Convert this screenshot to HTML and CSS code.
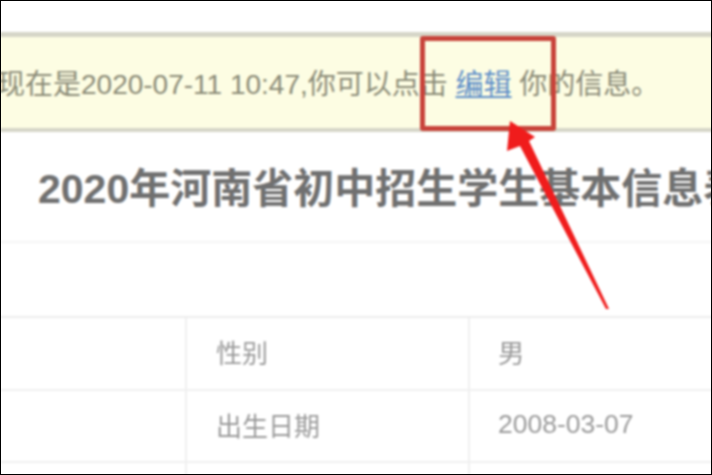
FILE: index.html
```html
<!DOCTYPE html>
<html lang="zh-CN">
<head>
<meta charset="utf-8">
<title>基本信息表</title>
<link rel="stylesheet" href="styles.css">
</head>
<body>
<div class="frame">
  <div class="content">
    <div class="notice">
      <p class="notice-text">现在是2020-07-11 10:47,你可以点击 <a class="edit-link">编辑</a> 你的信息。</p>
    </div>
    <h1 class="title">2020年河南省初中招生学生基本信息表</h1>
    <div class="table">
      <div class="cell"></div>
      <div class="cell label">性别</div>
      <div class="cell value">男</div>
      <div class="cell"></div>
      <div class="cell label">出生日期</div>
      <div class="cell value">2008-03-07</div>
      <div class="cell"></div>
      <div class="cell"></div>
      <div class="cell"></div>
    </div>
    <div class="highlight-box"></div>
    <svg class="arrow" viewBox="0 0 712 475" aria-hidden="true">
      <polygon points="510,121 535,137 529,141 609,309 606,309 520,146 507,151" fill="#f01c1c"/>
    </svg>
  </div>
</div>
</body>
</html>
```

FILE: styles.css
```css
* { box-sizing: border-box; }

html, body {
  margin: 0;
  padding: 0;
  background: #fff;
}

.frame {
  width: 712px;
  height: 475px;
  border: 1px solid #000;
  overflow: hidden;
  background: #fff;
}

.content {
  position: relative;
  width: 720px;
  height: 480px;
  margin: -1px 0 0 -1px;
  padding-top: 32px;
  filter: blur(1.2px);
  background: #fff;
  font-family: "Liberation Sans", "Noto Sans CJK SC", sans-serif;
}

.notice {
  height: 100px;
  display: flex;
  align-items: center;
  background: #fdfde3;
  border-top: 5px solid #d6d6c8;
  border-bottom: 4px solid #d6d6c8;
  overflow: hidden;
}

.notice-text {
  margin: 4px 0 0 -3px;
  white-space: nowrap;
  font-size: 28px;
  line-height: 1;
  color: #8a8a76;
}

.edit-link {
  color: #5f8fc8;
  text-decoration: underline;
}

.title {
  margin: 0;
  height: 111px;
  padding: 34px 0 0 38px;
  white-space: nowrap;
  overflow: hidden;
  font-size: 41px;
  line-height: 46px;
  font-weight: bold;
  color: #707070;
  border-bottom: 2px solid #f4f4f4;
}

.table {
  margin-top: 73px;
  display: grid;
  grid-template-columns: 187px 283px 1fr;
  grid-template-rows: 73px 72px 72px;
  border-top: 2px solid #ececec;
}

.cell {
  padding: 0 0 4px 29px;
  display: flex;
  align-items: center;
  font-size: 26px;
  color: #9a9a9a;
  border-bottom: 2px solid #f0f0f0;
  border-right: 2px solid #f0f0f0;
}

.value {
  font-size: 26.5px;
  padding-left: 28px;
  border-right: 0;
}

.highlight-box {
  position: absolute;
  left: 420px;
  top: 36px;
  width: 136px;
  height: 95px;
  border: 5px solid #c8433a;
  border-radius: 3px;
}

.arrow {
  position: absolute;
  left: 0;
  top: 0;
  width: 712px;
  height: 475px;
}
```
